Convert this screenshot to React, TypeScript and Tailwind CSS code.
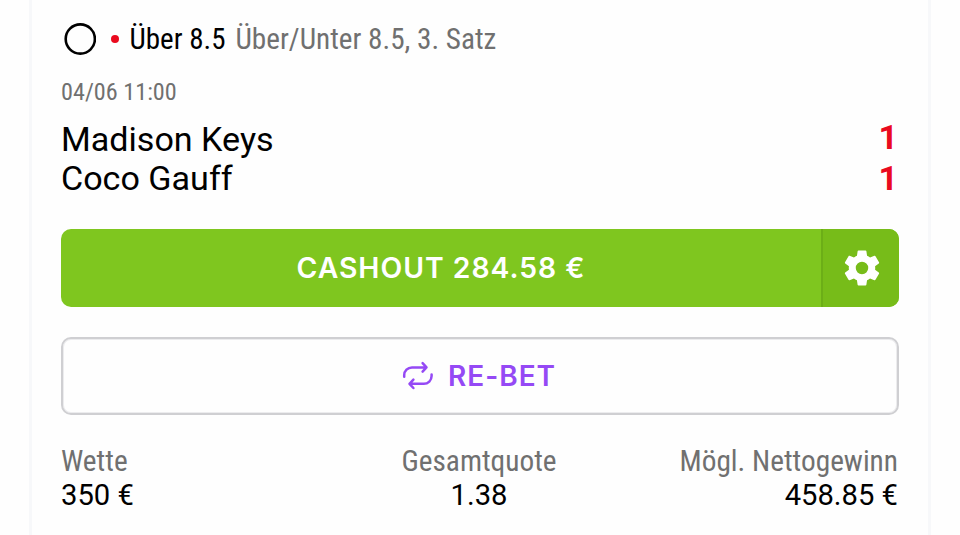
import type { ReactNode } from "react";

const condensed = "font-['Roboto_Condensed',Roboto,sans-serif] [font-stretch:75%] whitespace-nowrap";

function GearIcon() {
  return (
    <svg viewBox="0 0 24 24" className="ml-[2px] size-[44px]" fill="#fff">
      <path d="M19.14 12.94c.04-.3.06-.61.06-.94 0-.32-.02-.64-.07-.94l2.03-1.58a.49.49 0 0 0 .12-.61l-1.92-3.32a.488.488 0 0 0-.59-.22l-2.39.96c-.5-.38-1.03-.7-1.62-.94l-.36-2.54a.484.484 0 0 0-.48-.41h-3.84c-.24 0-.43.17-.47.41l-.36 2.54c-.59.24-1.13.57-1.62.94l-2.39-.96c-.22-.08-.47 0-.59.22L2.74 8.87c-.12.21-.08.47.12.61l2.03 1.58c-.05.3-.09.63-.09.94s.02.64.07.94l-2.03 1.58a.49.49 0 0 0-.12.61l1.92 3.32c.12.22.37.29.59.22l2.39-.96c.5.38 1.03.7 1.62.94l.36 2.54c.05.24.24.41.48.41h3.84c.24 0 .44-.17.47-.41l.36-2.54c.59-.24 1.13-.56 1.62-.94l2.39.96c.22.08.47 0 .59-.22l1.92-3.32c.12-.22.07-.47-.12-.61l-2.01-1.58zM12 15.4a3.4 3.4 0 1 1 0-6.8 3.4 3.4 0 0 1 0 6.8z" />
    </svg>
  );
}

function RepeatIcon() {
  return (
    <svg
      viewBox="0 0 32 32"
      className="size-8"
      fill="none"
      stroke="#9549f5"
      strokeWidth="2.5"
      strokeLinecap="round"
      strokeLinejoin="round"
    >
      <path d="M2.2 16.8v-1.6a7.8 7.8 0 0 1 7.8-7.8h14.4M20.6 3.2l3.9 4.2-3.9 4.2" />
      <path d="M29.6 14.4V16a7.8 7.8 0 0 1-7.8 7.8H7.6M11.4 19.6l-3.9 4.2 3.9 4.2" />
    </svg>
  );
}

function Stat({ label, align, children }: { label: string; align: string; children: ReactNode }) {
  return (
    <div className={`flex flex-col ${align}`}>
      <span className={`${condensed} text-[29.3px] leading-[34px] text-[#707070]`}>{label}</span>
      <span className="text-[29.2px] leading-[34px]">{children}</span>
    </div>
  );
}

export default function App() {
  return (
    <div className="h-[535px] overflow-hidden bg-[#fefefe] px-[29px] font-[Roboto,sans-serif] text-black">
      <div className="h-full border-x-[3px] border-[#f7f8fa] bg-[#fefefe] pl-[29px] pr-[29px] pt-[19px]">
        <div className="flex h-10 items-center pl-[3px]">
          <svg viewBox="0 0 32 32" className="size-8" fill="none" stroke="#000" strokeWidth="2.6">
            <circle cx="16.3" cy="16" r="14.6" />
          </svg>
          <span className="ml-[15px] size-2 rounded-full bg-[#ea0a1e]" />
          <span className={`${condensed} ml-[10.5px] pt-[2px] text-[29px]`}>Über 8.5</span>
          <span className={`${condensed} ml-[10px] pt-[2px] text-[29.2px] text-[#707070]`}>Über/Unter 8.5, 3. Satz</span>
        </div>
        <div className={`${condensed} mt-[18px] text-[24.2px] leading-[30px] text-[#707070]`}>04/06 11:00</div>
        <div className="mt-[13px] flex h-[79px] items-start justify-between">
          <div className="text-[34.1px] leading-[39px]">
            <div>Madison Keys</div>
            <div>Coco Gauff</div>
          </div>
          <div className="-mt-[3px] pr-[1px] text-[34px] font-bold leading-[41px] text-[#ea0a1e]">
            <div>1</div>
            <div>1</div>
          </div>
        </div>
        <div className="mt-[30px] flex h-[78px] overflow-hidden rounded-[10px] bg-[#7fc61f] font-[Inter,sans-serif]">
          <button className="flex-1 text-[28.3px] font-semibold tracking-[1px] text-white">CASHOUT 284.58 €</button>
          <button className="flex w-[78px] items-center justify-center border-l-2 border-[#6cae17] bg-[#77bc19]">
            <GearIcon />
          </button>
        </div>
        <button className="mt-[30px] flex h-[78px] w-full items-center justify-center gap-[14px] rounded-[10px] border-2 border-[#cfcfd2] pr-[2px] font-[Inter,sans-serif] text-[28px] font-semibold tracking-[1px] text-[#9549f5] shadow-[inset_0_0_0_1px_#ececee]">
          <RepeatIcon />
          <span>RE-BET</span>
        </button>
        <div className="mt-[29px] flex justify-between">
          <div className="flex-1"><Stat label="Wette" align="items-start">350 €</Stat></div>
          <div className="flex-1 pr-[1px]"><Stat label="Gesamtquote" align="items-center">1.38</Stat></div>
          <div className="flex-1 pr-[1px]"><Stat label="Mögl. Nettogewinn" align="items-end">458.85 €</Stat></div>
        </div>
      </div>
    </div>
  );
}
